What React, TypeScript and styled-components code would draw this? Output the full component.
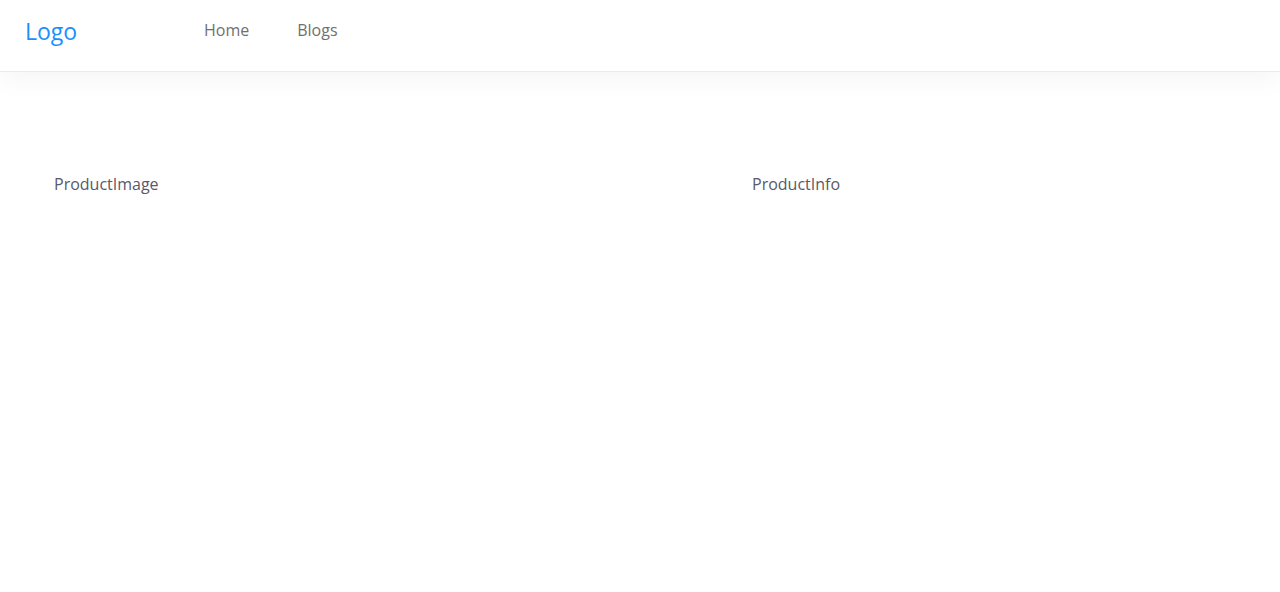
import React from 'react';
import styled, { createGlobalStyle } from 'styled-components';

const GlobalStyle = createGlobalStyle`
  html, body {
    margin: 0;
    padding: 0;
    background: #ffffff;
    font-family: "Open Sans", "Noto Sans", sans-serif;
  }
`;

const Header = styled.header`
  height: 71px;
  display: flex;
  align-items: center;
  background: #ffffff;
  border-bottom: 1px solid #ececec;
  box-shadow: 0 4px 30px rgba(0, 0, 0, 0.05);
  position: relative;
  z-index: 1;
`;

const Logo = styled.div`
  width: 179px;
  padding-left: 25px;
  font-size: 23px;
  color: #1890ff;
  margin-top: -10px;
`;

const Nav = styled.nav`
  display: flex;
  gap: 48px;
  margin-top: -11px;
`;

const NavLink = styled.a`
  font-size: 16px;
  color: #707070;
  text-decoration: none;
  cursor: pointer;
`;

const Main = styled.main`
  display: grid;
  grid-template-columns: 698px 1fr;
  padding: 101px 0 0 54px;
`;

const Column = styled.div`
  font-size: 16px;
  color: #595968;
`;

export default function App() {
  return (
    <>
      <GlobalStyle />
      <Header>
        <Logo>Logo</Logo>
        <Nav>
          <NavLink>Home</NavLink>
          <NavLink>Blogs</NavLink>
        </Nav>
      </Header>
      <Main>
        <Column>ProductImage</Column>
        <Column>ProductInfo</Column>
      </Main>
    </>
  );
}
